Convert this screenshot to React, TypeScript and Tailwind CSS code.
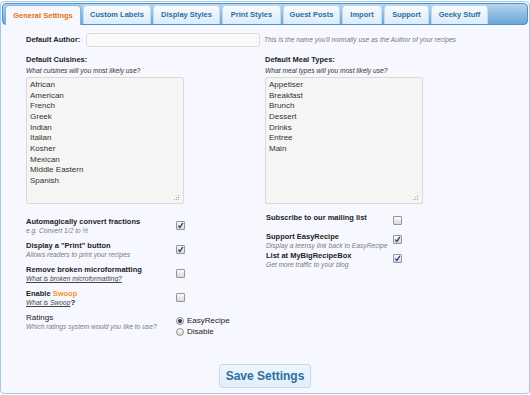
import React from "react";

const tabs = [
  { label: "General Settings", w: "w-[76px]", active: true },
  { label: "Custom Labels", w: "w-[68px]" },
  { label: "Display Styles", w: "w-[67px]" },
  { label: "Print Styles", w: "w-[59px]" },
  { label: "Guest Posts", w: "w-[57px]" },
  { label: "Import", w: "w-[40px]" },
  { label: "Support", w: "w-[45px]" },
  { label: "Geeky Stuff", w: "w-[57px]" },
];

const cuisines = ["African", "American", "French", "Greek", "Indian", "Italian", "Kosher", "Mexican", "Middle Eastern", "Spanish"];
const meals = ["Appetiser", "Breakfast", "Brunch", "Dessert", "Drinks", "Entree", "Main"];

function Box({ checked }: { checked?: boolean }) {
  return (
    <span className="flex h-[9px] w-[9px] shrink-0 items-center justify-center rounded-[1px] border border-[#969696] bg-gradient-to-b from-[#fbfbfb] to-[#d9d9d9]">
      {checked && (
        <svg width="7" height="7" viewBox="0 0 7 7">
          <path d="M1.2 3.6 L2.9 5.4 L5.9 0.9" stroke="#23408a" strokeWidth="1.3" fill="none" />
        </svg>
      )}
    </span>
  );
}

function Radio({ checked }: { checked?: boolean }) {
  return (
    <span className="flex h-[8px] w-[8px] shrink-0 items-center justify-center rounded-full border border-[#8f8f8f] bg-gradient-to-b from-white to-[#d6d6d6]">
      {checked && <span className="h-[4px] w-[4px] rounded-full bg-[#263f6a]" />}
    </span>
  );
}

function ListBox({ items }: { items: string[] }) {
  return (
    <div className="relative mt-[1px] h-[127px] w-[158px] rounded-[2px] border border-[#dadada] bg-[#f5f5f3] pl-[3px] pt-[2px] text-[8px] leading-[10.67px] text-[#333]">
      {items.map((i) => (
        <div key={i}>{i}</div>
      ))}
      <svg className="absolute bottom-[2px] right-[3px]" width="6" height="6" viewBox="0 0 6 6">
        <rect x="4" y="0" width="1" height="1" fill="#aaa" />
        <rect x="2" y="2" width="1" height="1" fill="#aaa" />
        <rect x="4" y="2" width="1" height="1" fill="#aaa" />
        <rect x="0" y="4" width="1" height="1" fill="#aaa" />
        <rect x="2" y="4" width="1" height="1" fill="#aaa" />
        <rect x="4" y="4" width="1" height="1" fill="#aaa" />
      </svg>
    </div>
  );
}

function LeftRow({ label, hint, checked }: { label: React.ReactNode; hint: React.ReactNode; checked?: boolean }) {
  return (
    <div className="flex h-[24px]">
      <div className="w-[150px]">
        <div className="text-[7.5px] font-bold leading-[10px] text-[#222]">{label}</div>
        <div className="text-[6.67px] italic leading-[8px] text-[#7a7a7a]">{hint}</div>
      </div>
      <div className="mt-[4px]">
        <Box checked={checked} />
      </div>
    </div>
  );
}

function RightRow({ label, hint, checked }: { label: string; hint?: string; checked?: boolean }) {
  return (
    <div className="flex h-[19px]">
      <div className="w-[127px]">
        <div className="text-[7.5px] font-bold leading-[10px] text-[#222]">{label}</div>
        {hint && <div className="text-[6.67px] italic leading-[8px] text-[#7a7a7a]">{hint}</div>}
      </div>
      <div className="mt-[3px]">
        <Box checked={checked} />
      </div>
    </div>
  );
}

export default function App() {
  return (
    <div className="h-[395px] w-[530px] bg-white pt-[1px] font-['Liberation_Sans',Arial,sans-serif]">
      <div className="h-[393px] rounded-[4px] border border-[#a6c9e2] bg-[#f7f8ff] p-[1px]">
        <div className="flex h-[22px] items-end gap-[2px] rounded-[4px] border border-[#4b93ce] bg-gradient-to-b from-[#b7d5ee] via-[#8ebde3] to-[#6ba6d5] pl-[2px]">
          {tabs.map((t) =>
            t.active ? (
              <div
                key={t.label}
                className={`${t.w} -mb-[1px] flex h-[20px] items-center justify-center rounded-t-[4px] border border-b-0 border-[#79b7e7] bg-[#f7f8ff] text-[7.5px] font-bold text-[#e17009]`}
              >
                {t.label}
              </div>
            ) : (
              <div
                key={t.label}
                className={`${t.w} flex h-[19px] items-center justify-center rounded-t-[4px] border border-b-0 border-[#c5dbec] bg-gradient-to-b from-[#f7fbfe] to-[#dcecfa] text-[7.5px] font-bold text-[#2e6e9e]`}
              >
                {t.label}
              </div>
            )
          )}
        </div>

        <div className="pt-[8px]">
          <div className="flex h-[14px] items-center pl-[24px]">
            <div className="w-[60px] text-[7.5px] font-bold text-[#222]">Default Author:</div>
            <div className="h-[14px] w-[174px] rounded-[3px] border border-[#dcdcdc] bg-[#f9f9f9]" />
            <div className="ml-[4px] text-[6.67px] italic text-[#777]">This is the name you'll normally use as the Author of your recipes</div>
          </div>

          <div className="mt-[8px] flex pl-[24px]">
            <div className="w-[239px]">
              <div className="text-[7.5px] font-bold leading-[10px] text-[#222]">Default Cuisines:</div>
              <div className="text-[6.67px] italic leading-[11px] text-[#333]">What cuisines will you most likely use?</div>
              <ListBox items={cuisines} />
            </div>
            <div>
              <div className="text-[7.5px] font-bold leading-[10px] text-[#222]">Default Meal Types:</div>
              <div className="text-[6.67px] italic leading-[11px] text-[#333]">What meal types will you most likely use?</div>
              <ListBox items={meals} />
            </div>
          </div>

          <div className="mt-[9px] flex pl-[24px]">
            <div className="w-[240px] pt-[4px]">
              <LeftRow label="Automagically convert fractions" hint="e.g. Convert 1/2 to ½" checked />
              <LeftRow label={'Display a "Print" button'} hint="Allows readers to print your recipes" checked />
              <LeftRow
                label="Remove broken microformatting"
                hint={<span className="text-[#444] underline">What is broken microformatting?</span>}
              />
              <LeftRow
                label={
                  <>
                    Enable <span className="text-[#f7941d]">Swoop</span>
                  </>
                }
                hint={
                  <span className="text-[#444]">
                    <span className="underline">What is Swoop</span>
                    <span className="text-[8px] font-bold not-italic text-[#222]">?</span>
                  </span>
                }
              />
              <div className="flex h-[24px]">
                <div className="w-[150px]">
                  <div className="text-[8px] leading-[10px] text-[#222]">Ratings</div>
                  <div className="text-[6.67px] italic leading-[8px] text-[#7a7a7a]">Which ratings system would you like to use?</div>
                </div>
                <div className="mt-[3px] text-[8px] leading-[10.5px] text-[#222]">
                  <div className="flex items-center gap-[3px]">
                    <Radio checked />
                    <span>EasyRecipe</span>
                  </div>
                  <div className="flex items-center gap-[3px]">
                    <Radio />
                    <span>Disable</span>
                  </div>
                </div>
              </div>
            </div>
            <div>
              <RightRow label="Subscribe to our mailing list" />
              <RightRow label="Support EasyRecipe" hint="Display a teensy link back to EasyRecipe" checked />
              <RightRow label="List at MyBigRecipeBox" hint="Get more traffic to your blog" checked />
            </div>
          </div>

          <div className="mt-[27px] flex justify-center">
            <div className="flex h-[24px] w-[92px] items-center justify-center rounded-[3px] border border-[#c5dbec] bg-gradient-to-b from-[#eef6fd] to-[#dfeffc] text-[12px] font-bold text-[#2e6e9e]">
              Save Settings
            </div>
          </div>
        </div>
      </div>
    </div>
  );
}
